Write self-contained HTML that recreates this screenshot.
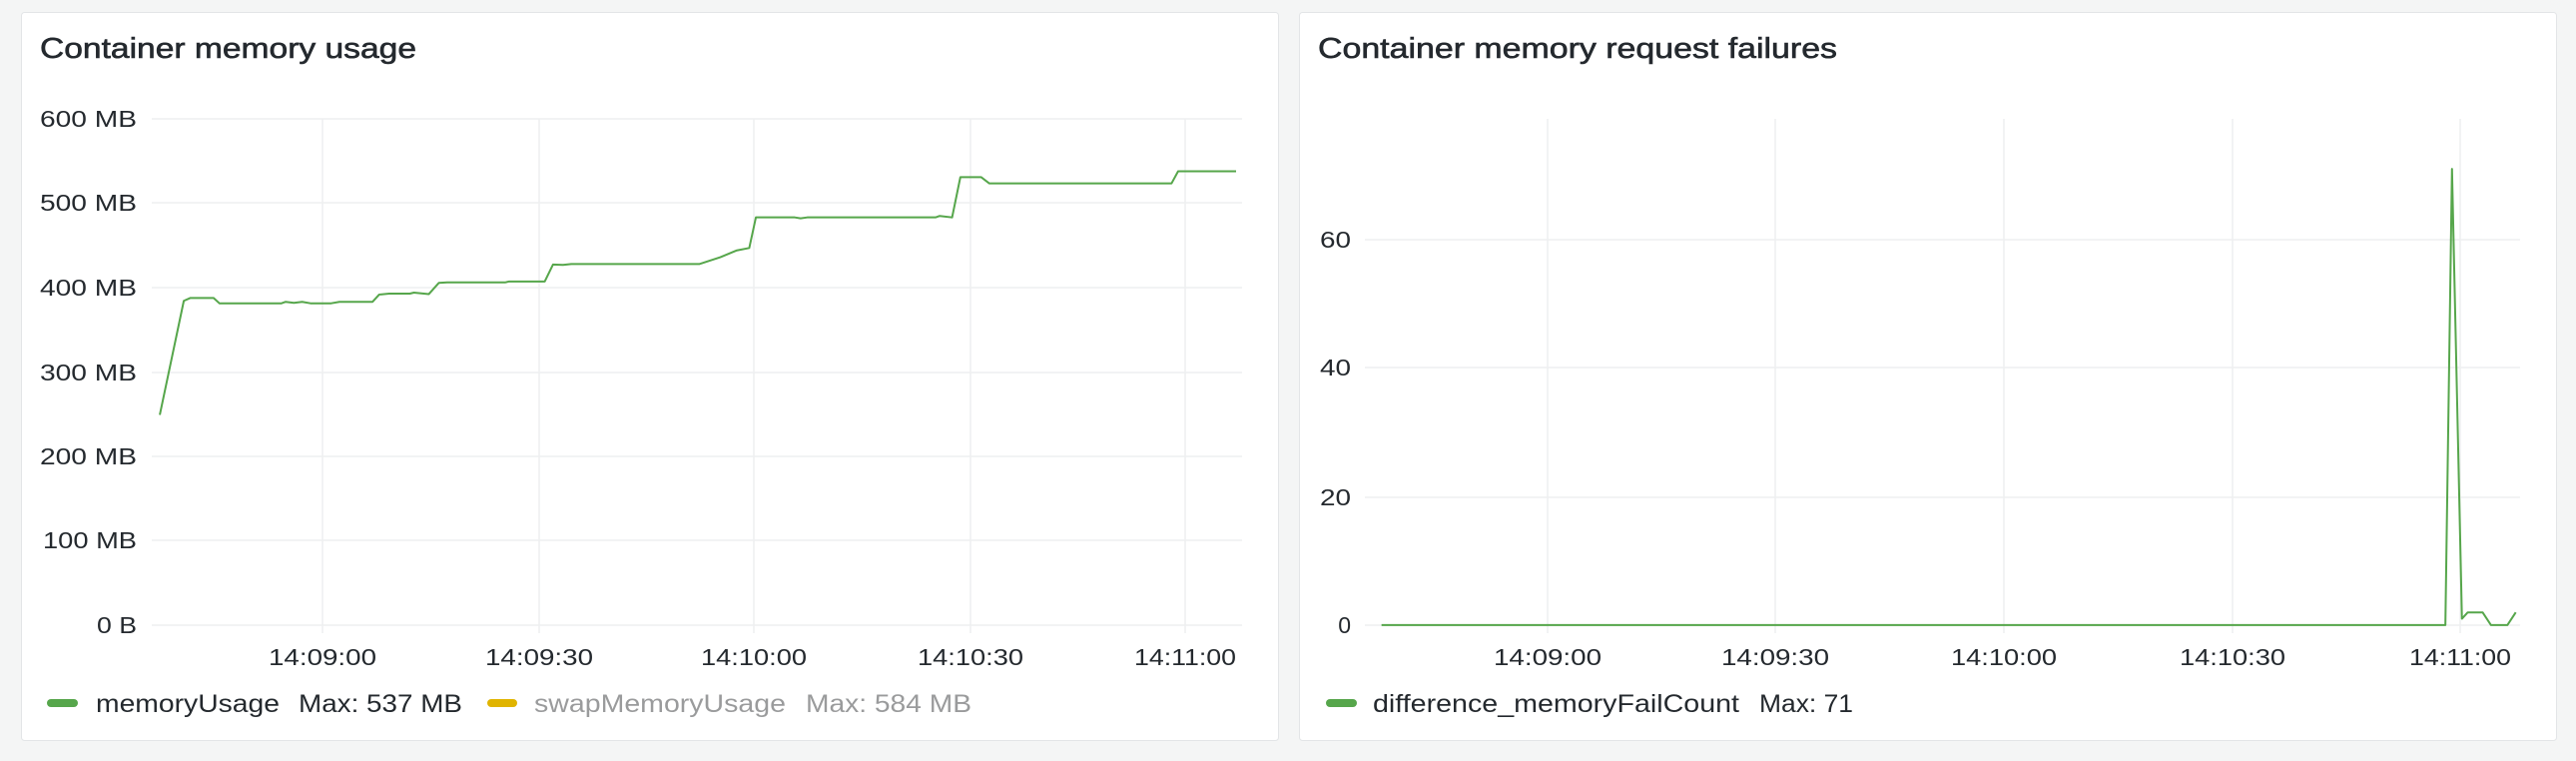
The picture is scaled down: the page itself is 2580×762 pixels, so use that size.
<!DOCTYPE html>
<html><head><meta charset="utf-8"><style>
html,body{margin:0;padding:0;background:#f4f5f5;}
svg{display:block;font-family:"Liberation Sans",sans-serif;}
</style></head><body>
<svg width="2580" height="762" viewBox="0 0 2580 762" xmlns="http://www.w3.org/2000/svg">
<rect x="0" y="0" width="2580" height="762" fill="#f4f5f5"/>
<rect x="21.5" y="12.5" width="1259" height="729" rx="3" fill="#fff" stroke="#e3e5e7"/>
<rect x="1301.5" y="12.5" width="1259" height="729" rx="3" fill="#fff" stroke="#e3e5e7"/>

<g fill="#24292e" stroke="#24292e" stroke-width="0.6" font-size="29">
<text x="40" y="58" textLength="377" lengthAdjust="spacingAndGlyphs">Container memory usage</text>
<text x="1320" y="58" textLength="520" lengthAdjust="spacingAndGlyphs">Container memory request failures</text>
</g>

<g stroke="#eeeff0" stroke-width="1.5">
<line x1="152" y1="119" x2="1244" y2="119"/><line x1="152" y1="203" x2="1244" y2="203"/>
<line x1="152" y1="288" x2="1244" y2="288"/><line x1="152" y1="373" x2="1244" y2="373"/>
<line x1="152" y1="457" x2="1244" y2="457"/><line x1="152" y1="541" x2="1244" y2="541"/>
<line x1="152" y1="626" x2="1244" y2="626"/>
<line x1="323" y1="119" x2="323" y2="634"/><line x1="540" y1="119" x2="540" y2="634"/>
<line x1="755" y1="119" x2="755" y2="634"/><line x1="972" y1="119" x2="972" y2="634"/>
<line x1="1187" y1="119" x2="1187" y2="634"/>
<line x1="1367" y1="240" x2="2524" y2="240"/><line x1="1367" y1="368" x2="2524" y2="368"/>
<line x1="1367" y1="498" x2="2524" y2="498"/><line x1="1367" y1="626" x2="2524" y2="626"/>
<line x1="1550" y1="119" x2="1550" y2="634"/><line x1="1778" y1="119" x2="1778" y2="634"/>
<line x1="2007" y1="119" x2="2007" y2="634"/><line x1="2236" y1="119" x2="2236" y2="634"/>
<line x1="2464" y1="119" x2="2464" y2="634"/>
</g>

<g fill="#24292e" font-size="23" text-anchor="end">
<text x="137" y="127" textLength="97" lengthAdjust="spacingAndGlyphs">600 MB</text>
<text x="137" y="211" textLength="97" lengthAdjust="spacingAndGlyphs">500 MB</text>
<text x="137" y="296" textLength="97" lengthAdjust="spacingAndGlyphs">400 MB</text>
<text x="137" y="381" textLength="97" lengthAdjust="spacingAndGlyphs">300 MB</text>
<text x="137" y="465" textLength="97" lengthAdjust="spacingAndGlyphs">200 MB</text>
<text x="137" y="549" textLength="94" lengthAdjust="spacingAndGlyphs">100 MB</text>
<text x="137" y="634" textLength="40" lengthAdjust="spacingAndGlyphs">0 B</text>
<text x="1353" y="248" textLength="31" lengthAdjust="spacingAndGlyphs">60</text>
<text x="1353" y="376" textLength="31" lengthAdjust="spacingAndGlyphs">40</text>
<text x="1353" y="506" textLength="31" lengthAdjust="spacingAndGlyphs">20</text>
<text x="1353" y="634">0</text>
</g>
<g fill="#24292e" font-size="23" text-anchor="middle">
<text x="323" y="666" textLength="108" lengthAdjust="spacingAndGlyphs">14:09:00</text>
<text x="540" y="666" textLength="108" lengthAdjust="spacingAndGlyphs">14:09:30</text>
<text x="755" y="666" textLength="106" lengthAdjust="spacingAndGlyphs">14:10:00</text>
<text x="972" y="666" textLength="106" lengthAdjust="spacingAndGlyphs">14:10:30</text>
<text x="1187" y="666" textLength="102" lengthAdjust="spacingAndGlyphs">14:11:00</text>
<text x="1550" y="666" textLength="108" lengthAdjust="spacingAndGlyphs">14:09:00</text>
<text x="1778" y="666" textLength="108" lengthAdjust="spacingAndGlyphs">14:09:30</text>
<text x="2007" y="666" textLength="106" lengthAdjust="spacingAndGlyphs">14:10:00</text>
<text x="2236" y="666" textLength="106" lengthAdjust="spacingAndGlyphs">14:10:30</text>
<text x="2464" y="666" textLength="102" lengthAdjust="spacingAndGlyphs">14:11:00</text>
</g>

<g transform="scale(0.8292,0.4859)">
<polyline fill="none" stroke="#56a64b" stroke-width="2" vector-effect="non-scaling-stroke" stroke-linejoin="round"
points="193,855 222,620 230,614 258,614 265,625 340,625 345,622 355,624 365,622 375,625 400,625 410,622 450,622 458,607 470,605 495,605 500,603 518,606 530,583 540,582 610,582 615,580 658,580 668,545 680,546 690,544 845,544 870,530 890,516 905,511 913,448 960,448 967,450 975,448 1130,448 1135,445 1150,448 1160,365 1185,365 1195,378 1415,378 1423,353 1493,353"/>
</g>
<g transform="translate(1280,0) scale(0.8292,0.4859)">
<polyline fill="none" stroke="#56a64b" stroke-width="2" vector-effect="non-scaling-stroke" stroke-linejoin="round"
points="125,1288 1410,1288 1418,348 1430,1275 1437,1262 1455,1262 1465,1288 1485,1288 1495,1262"/>
</g>

<rect x="47" y="700" width="31" height="8" rx="4" fill="#56a64b"/>
<rect x="488" y="700" width="30" height="8" rx="4" fill="#e0b400"/>
<rect x="1328" y="700" width="31" height="8" rx="4" fill="#56a64b"/>
<g font-size="25">
<text x="96" y="713" fill="#24292e" textLength="184" lengthAdjust="spacingAndGlyphs">memoryUsage</text>
<text x="299" y="713" fill="#24292e" textLength="164" lengthAdjust="spacingAndGlyphs">Max: 537 MB</text>
<text x="535" y="713" fill="#9a9b9c" textLength="252" lengthAdjust="spacingAndGlyphs">swapMemoryUsage</text>
<text x="807" y="713" fill="#9a9b9c" textLength="166" lengthAdjust="spacingAndGlyphs">Max: 584 MB</text>
<text x="1375" y="713" fill="#24292e" textLength="367" lengthAdjust="spacingAndGlyphs">difference_memoryFailCount</text>
<text x="1762" y="713" fill="#24292e" textLength="94" lengthAdjust="spacingAndGlyphs">Max: 71</text>
</g>
</svg>
</body></html>
